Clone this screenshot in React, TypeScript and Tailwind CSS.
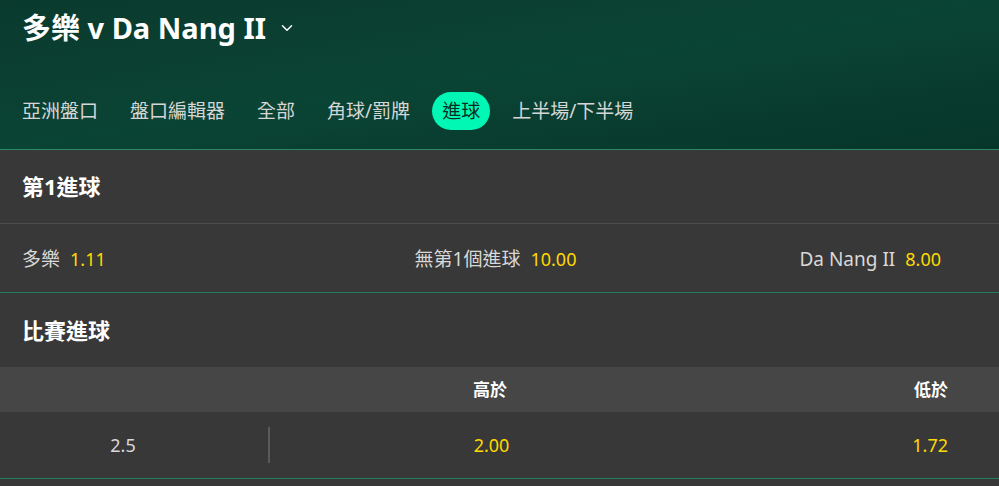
import { ChevronDown } from 'lucide-react';

const font = { fontFamily: '"Noto Sans", "Noto Sans CJK TC", sans-serif' };

const tabs = ['亞洲盤口', '盤口編輯器', '全部', '角球/罰牌', '進球', '上半場/下半場'];

function Odd({ label, price }: { label: string; price: string }) {
  return (
    <span className="flex items-center gap-[10px]">
      <span className="text-[#d9d9d9] text-[19px]">{label}</span>
      <span className="text-[#ffd800] text-[18px]">{price}</span>
    </span>
  );
}

export default function App() {
  return (
    <div className="w-[999px] h-[486px] overflow-hidden bg-[#383838]" style={font}>
      {/* Header */}
      <div className="h-[150px] bg-gradient-to-br from-[#0a3a2e] via-[#0a4434] to-[#07352a] border-b border-[#2a8a68] flex flex-col">
        <div className="flex items-center pl-[22px] pt-[9px] h-[45px]">
          <h1 className="text-[29px] font-bold text-white leading-none">多樂 v Da Nang II</h1>
          <ChevronDown className="ml-[12px] mt-[2px] h-[18px] w-[18px] text-white" strokeWidth={2} />
        </div>
        <div className="mt-auto mb-[19px] flex items-center gap-[12px] pl-[12px]">
          {tabs.map((t) => (
            <span
              key={t}
              className={
                t === '進球'
                  ? 'px-[10px] h-[38px] flex items-center rounded-full bg-[#00f7b4] text-[#0c2a22] text-[19px]'
                  : 'px-[10px] h-[38px] flex items-center text-[#d6d6d6] text-[19px]'
              }
            >
              {t}
            </span>
          ))}
        </div>
      </div>

      {/* 第1進球 */}
      <div className="h-[74px] flex items-center pl-[22px] border-b border-[#4c4c4c]">
        <h2 className="text-[22px] font-bold text-white">第1進球</h2>
      </div>
      <div className="h-[69px] grid grid-cols-3 items-center pt-[2px] border-b border-[#1f7e5e]">
        <div className="pl-[22px]">
          <Odd label="多樂" price="1.11" />
        </div>
        <div className="flex justify-center pr-[8px]">
          <Odd label="無第1個進球" price="10.00" />
        </div>
        <div className="flex justify-end pr-[58px]">
          <Odd label="Da Nang II" price="8.00" />
        </div>
      </div>

      {/* 比賽進球 */}
      <div className="h-[74px] flex items-center pl-[22px]">
        <h2 className="text-[22px] font-bold text-white">比賽進球</h2>
      </div>
      <div className="h-[45px] bg-[#464646] flex items-center text-[17px] font-bold text-white">
        <div className="w-[269px]" />
        <div className="w-[442px] text-center">高於</div>
        <div className="flex-1 text-right pr-[51px]">低於</div>
      </div>
      <div className="h-[67px] flex items-center text-[18px] border-b border-[#1f7e5e]">
        <div className="w-[246px] text-center text-[#d9d9d9]">2.5</div>
        <div className="w-[2px] h-[36px] bg-[#5a5a5a] ml-[22px]" />
        <div className="w-[443px] text-center text-[#ffd800]">2.00</div>
        <div className="flex-1 text-right pr-[51px] text-[#ffd800]">1.72</div>
      </div>
    </div>
  );
}
